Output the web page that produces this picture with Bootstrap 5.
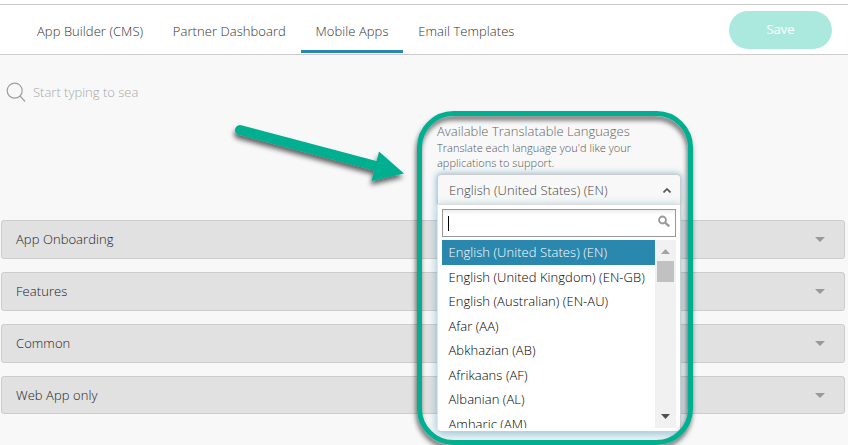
<!DOCTYPE html>
<html lang="en">
<head>
<meta charset="utf-8">
<meta name="viewport" content="width=device-width, initial-scale=1">
<title>Mobile Apps</title>
<link href="https://cdn.jsdelivr.net/npm/bootstrap@5.3.0/dist/css/bootstrap.min.css" rel="stylesheet">
<style>
body{font-family:"Open Sans",sans-serif;font-weight:300;font-size:13px;line-height:18px;color:#333;background:#f8f8f8;height:445px;overflow:hidden}
.topbar{margin-top:4px;height:51px;border-top:1px solid #ccc;border-bottom:1px solid #ccc}
.topwrap{background:#fff;display:flow-root}
.tabs{padding-left:22px}
.tabs .nav-link{color:#333;padding:17px 14.700px 11px 15px;height:48px;border-bottom:3px solid transparent;border-radius:0;font-size:13px;letter-spacing:.06px;white-space:nowrap}
.tabs .nav-link.active{border-bottom-color:#2a87ad}
.save{width:103px;height:38px;margin:6px 16px 0 0;background:#abe9de;color:#fff;font-size:13px;font-weight:500;border-radius:19px}
.finder{height:20px;margin:27px 0 0 6px;color:#a8a8a8}
.finder-text{margin-left:7px}
.langs{width:244px;margin:20px 0 0 437px}
.lang-title{font-size:13px;color:#666;line-height:18px;letter-spacing:.03px}
.lang-help{font-size:11px;line-height:15px;color:#555;margin-bottom:4px;letter-spacing:.02px}
.trigger{height:31px;padding:0 9px 0 11px;border:1px solid #ccc;border-bottom:0;border-radius:4px 4px 0 0;background:#f8f8f8;color:#444;letter-spacing:.05px;box-shadow:0 0 7px rgba(42,135,173,.6)}
.drop{top:30px;left:0;width:244px;height:228px;z-index:5;background:#fff;border:1px solid #ccc;border-left-color:#dce8ed;border-top:1px solid #ddd;border-radius:0 0 4px 4px;padding:4px 4px;box-shadow:0 2px 10px rgba(42,135,173,.5)}
.query{height:28px;border:1px solid #999;padding:0 5px;margin-bottom:3px;background:linear-gradient(#eee,#fff 5px)}
.query svg{margin-top:-4px}
.cursor-bar{width:1px;height:15px;background:#000}
.options{height:188px;overflow:hidden}
.option{height:24.5px;padding:0 6.500px;line-height:24px;color:#000;white-space:nowrap;font-size:13px;letter-spacing:.05px}
.option.chosen{background:#2a87ad;color:#fff}
.scroll{width:21px;background:#f1f1f1;padding:9px 2px 9px}
.thumb{width:17px;height:21px;background:#c1c1c1;margin-top:7px}
.panels{padding:15px 3px 0 1px}
.panel{height:39px;margin-bottom:13px;padding:0 19px 0 14px;background:#e1e1e1;border:1px solid #ccc;border-radius:3px;color:#222;letter-spacing:.06px}
.panel span{padding-bottom:1px}
.panel:last-child{height:38px}
.notes{left:0;top:0;z-index:10;pointer-events:none}
</style>
<script src="https://cdn.jsdelivr.net/npm/bootstrap@5.3.0/dist/js/bootstrap.bundle.min.js"></script>
</head>
<body class="position-relative">
<div class="topwrap">
<header class="topbar d-flex justify-content-between">
  <nav class="nav tabs flex-nowrap">
    <a class="nav-link" href="#">App Builder (CMS)</a>
    <a class="nav-link" href="#">Partner Dashboard</a>
    <a class="nav-link active" href="#">Mobile Apps</a>
    <a class="nav-link" href="#">Email Templates</a>
  </nav>
  <button class="btn save border-0 p-0" type="button">Save</button>
</header>
</div>
<main>
  <div class="finder d-flex align-items-center">
    <svg width="20" height="20" viewBox="0 0 20 20" fill="none" stroke="#a0a0a0" stroke-width="1.2"><circle cx="8.7" cy="8.7" r="7.5"/><path d="M14 14l5 5.500"/></svg>
    <span class="finder-text">Start typing to sea</span>
  </div>
  <section class="langs">
    <div class="lang-title">Available Translatable Languages</div>
    <div class="lang-help">Translate each language you'd like your applications to support.</div>
    <div class="position-relative">
      <div class="trigger d-flex align-items-center justify-content-between">
        <span>English (United States) (EN)</span>
        <svg width="8" height="5" viewBox="0 0 8 5" fill="none" stroke="#555" stroke-width="1.7"><path d="M.5 4.500L4 1l3.500 3.500"/></svg>
      </div>
      <div class="drop position-absolute">
        <div class="query d-flex align-items-center justify-content-between">
          <span class="cursor-bar"></span>
          <svg width="12" height="13" viewBox="0 0 12 13" fill="none" stroke="#999"><circle cx="4.500" cy="5" r="3.500" stroke-width="1.800"/><path d="M7 7.500l4.200 4" stroke-width="2.400"/></svg>
        </div>
        <div class="options d-flex">
          <div class="flex-grow-1">
            <div class="option chosen">English (United States) (EN)</div>
            <div class="option">English (United Kingdom) (EN-GB)</div>
            <div class="option">English (Australian) (EN-AU)</div>
            <div class="option">Afar (AA)</div>
            <div class="option">Abkhazian (AB)</div>
            <div class="option">Afrikaans (AF)</div>
            <div class="option">Albanian (AL)</div>
            <div class="option">Amharic (AM)</div>
          </div>
          <div class="scroll d-flex flex-column align-items-center">
            <svg width="9" height="5" viewBox="0 0 9 5"><path d="M0 5L4.500 0 9 5z" fill="#a3a3a3"/></svg>
            <div class="thumb"></div>
            <svg class="mt-auto" width="9" height="5" viewBox="0 0 9 5"><path d="M0 0h9L4.500 5z" fill="#505050"/></svg>
          </div>
        </div>
      </div>
    </div>
  </section>
  <div class="panels">
    <div class="panel d-flex align-items-center justify-content-between"><span>App Onboarding</span><svg width="10" height="5" viewBox="0 0 10 5"><path d="M0 0h10L5 5z" fill="#999"/></svg></div>
    <div class="panel d-flex align-items-center justify-content-between"><span>Features</span><svg width="10" height="5" viewBox="0 0 10 5"><path d="M0 0h10L5 5z" fill="#999"/></svg></div>
    <div class="panel d-flex align-items-center justify-content-between"><span>Common</span><svg width="10" height="5" viewBox="0 0 10 5"><path d="M0 0h10L5 5z" fill="#999"/></svg></div>
    <div class="panel d-flex align-items-center justify-content-between"><span>Web App only</span><svg width="10" height="5" viewBox="0 0 10 5"><path d="M0 0h10L5 5z" fill="#999"/></svg></div>
  </div>
</main>
<svg class="notes position-absolute" width="848" height="445" viewBox="0 0 848 445">
  <defs><filter id="shade" x="-10%" y="-20%" width="120%" height="160%"><feDropShadow dx="-1" dy="4" stdDeviation="2.500" flood-color="#000" flood-opacity=".6"/></filter></defs>
  <g filter="url(#shade)">
    <path d="M240 130L376 166" stroke="#06ae90" stroke-width="10" stroke-linecap="round"/>
    <path d="M379 151.500L404 173.500 371.500 181z" fill="#06ae90"/>
  </g>
  <rect x="419.500" y="113.500" width="271" height="329" rx="34" fill="none" stroke="#06ae90" stroke-width="5" filter="url(#shade)"/>
</svg>
</body>
</html>
